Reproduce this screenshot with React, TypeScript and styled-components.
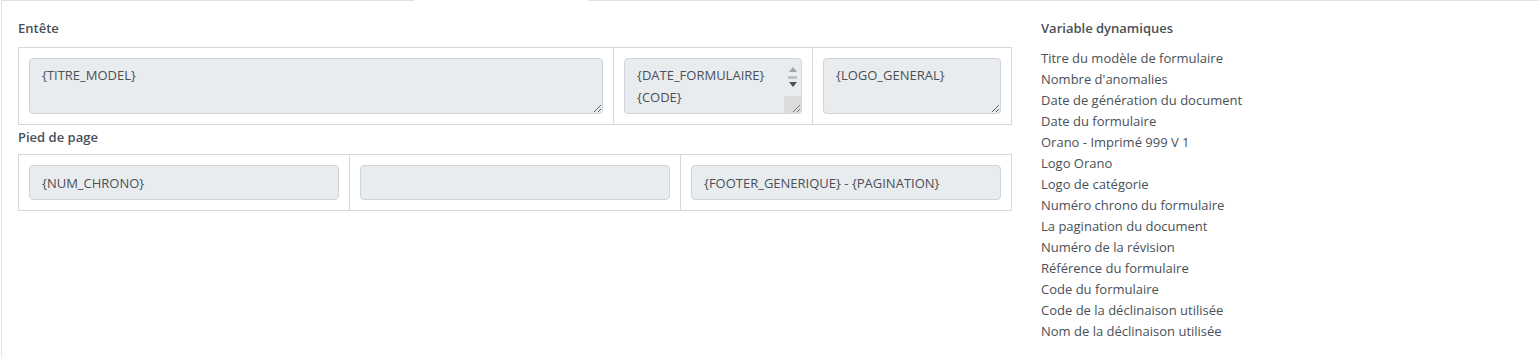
import React from "react";
import styled, { createGlobalStyle } from "styled-components";

const Global = createGlobalStyle`
  html, body { margin: 0; padding: 0; background: #fff; }
  body { font-family: "Open Sans", "Segoe UI", "Liberation Sans", sans-serif; color: #495057; }
  * { box-sizing: border-box; }
`;

const Pane = styled.div`
  margin-left: 1px;
  width: 1538px;
  min-height: 357px;
  border-left: 1px solid #dee2e6;
`;

const TopEdge = styled.div`
  display: flex;
  height: 1px;
`;

const EdgeSegment = styled.div<{ $w?: number; $blank?: boolean }>`
  ${(p) => (p.$w ? `width: ${p.$w}px;` : "flex: 1;")}
  background: ${(p) => (p.$blank ? "transparent" : "#dee2e6")};
`;

const Grid = styled.div`
  display: grid;
  grid-template-columns: 994px 1fr;
  column-gap: 29px;
  padding: 16px 16px 0 16px;
`;

const Label = styled.div<{ $mt?: number; $mb?: number }>`
  font-size: 13px;
  font-weight: 600;
  line-height: 20px;
  color: #495057;
  margin-top: ${(p) => p.$mt ?? 0}px;
  margin-bottom: ${(p) => p.$mb ?? 0}px;
`;

const Table = styled.div<{ $cols: string }>`
  display: grid;
  grid-template-columns: ${(p) => p.$cols};
  border: 1px solid #d6d8db;
`;

const Cell = styled.div<{ $first?: boolean }>`
  padding: 10px;
  border-left: ${(p) => (p.$first ? "none" : "1px solid #d6d8db")};
  display: flex;
`;

const AreaWrap = styled.div`
  position: relative;
  width: 100%;
  height: 56px;
`;

const Area = styled.textarea<{ $scroll?: boolean }>`
  display: block;
  width: 100%;
  height: 56px;
  padding: 6px ${(p) => (p.$scroll ? 30 : 12)}px 6px 12px;
  font-family: inherit;
  font-size: 13px;
  line-height: 21.5px;
  color: #495057;
  background: #e9ecef;
  border: 1px solid #ced4da;
  border-radius: 4px;
  resize: vertical;
  outline: none;
  overflow: hidden;
`;

const FakeScroll = styled.div`
  position: absolute;
  top: 1px;
  right: 1px;
  bottom: 1px;
  width: 17px;
  display: flex;
  flex-direction: column;
  align-items: center;
  border-radius: 0 3px 3px 0;
  overflow: hidden;
`;

const ScrollArrow = styled.div<{ $dir: "up" | "down"; $dim?: boolean }>`
  width: 0;
  height: 0;
  border-left: 4.5px solid transparent;
  border-right: 4.5px solid transparent;
  ${(p) =>
    p.$dir === "up"
      ? `border-bottom: 5px solid ${p.$dim ? "#a3a3a3" : "#505050"}; margin-top: 8px;`
      : `border-top: 5px solid ${p.$dim ? "#a3a3a3" : "#505050"}; margin-top: 3px;`}
`;

const ScrollThumb = styled.div`
  width: 9px;
  height: 3px;
  margin-top: 4px;
  background: #c1c1c1;
`;

const ScrollCorner = styled.div`
  margin-top: auto;
  width: 100%;
  height: 17px;
  background: #dcdcdc;
  display: flex;
  align-items: flex-end;
  justify-content: flex-end;
`;

const Field = styled.input`
  width: 100%;
  height: 35px;
  padding: 6px 12px;
  font-family: inherit;
  font-size: 13px;
  color: #495057;
  background: #e9ecef;
  border: 1px solid #ced4da;
  border-radius: 4px;
  outline: none;
`;

const VarList = styled.ul`
  list-style: none;
  margin: 10px 0 0 0;
  padding: 0;
`;

const VarItem = styled.li`
  font-size: 13px;
  line-height: 21px;
  color: #495057;
`;

const vars = [
  "Titre du modèle de formulaire",
  "Nombre d'anomalies",
  "Date de génération du document",
  "Date du formulaire",
  "Orano - Imprimé 999 V 1",
  "Logo Orano",
  "Logo de catégorie",
  "Numéro chrono du formulaire",
  "La pagination du document",
  "Numéro de la révision",
  "Référence du formulaire",
  "Code du formulaire",
  "Code de la déclinaison utilisée",
  "Nom de la déclinaison utilisée",
];

function Grip() {
  return (
    <svg width="10" height="10" viewBox="0 0 10 10">
      <path d="M9 2 L2 9 M9 6 L6 9" stroke="#7a7a7a" strokeWidth="1" />
    </svg>
  );
}

export default function App() {
  return (
    <>
      <Global />
      <Pane>
        <TopEdge>
          <EdgeSegment $w={412} />
          <EdgeSegment $w={174} $blank />
          <EdgeSegment />
        </TopEdge>
        <Grid>
          <div>
            <Label $mt={1} $mb={9}>Entête</Label>
            <Table $cols="594px 199px 1fr">
              <Cell $first>
                <Area readOnly defaultValue="{TITRE_MODEL}" />
              </Cell>
              <Cell>
                <AreaWrap>
                  <Area
                    readOnly
                    $scroll
                    defaultValue={"{DATE_FORMULAIRE}\n{CODE}\n{REFERENCE}"}
                  />
                  <FakeScroll>
                    <ScrollArrow $dir="up" $dim />
                    <ScrollThumb />
                    <ScrollArrow $dir="down" />
                    <ScrollCorner>
                      <Grip />
                    </ScrollCorner>
                  </FakeScroll>
                </AreaWrap>
              </Cell>
              <Cell>
                <Area readOnly defaultValue="{LOGO_GENERAL}" />
              </Cell>
            </Table>
            <Label $mt={2} $mb={7}>Pied de page</Label>
            <Table $cols="330px 331px 1fr">
              <Cell $first>
                <Field readOnly defaultValue="{NUM_CHRONO}" />
              </Cell>
              <Cell>
                <Field readOnly defaultValue="" />
              </Cell>
              <Cell>
                <Field readOnly defaultValue="{FOOTER_GENERIQUE} - {PAGINATION}" />
              </Cell>
            </Table>
          </div>
          <div>
            <Label $mt={1}>Variable dynamiques</Label>
            <VarList>
              {vars.map((v) => (
                <VarItem key={v}>{v}</VarItem>
              ))}
            </VarList>
          </div>
        </Grid>
      </Pane>
    </>
  );
}
